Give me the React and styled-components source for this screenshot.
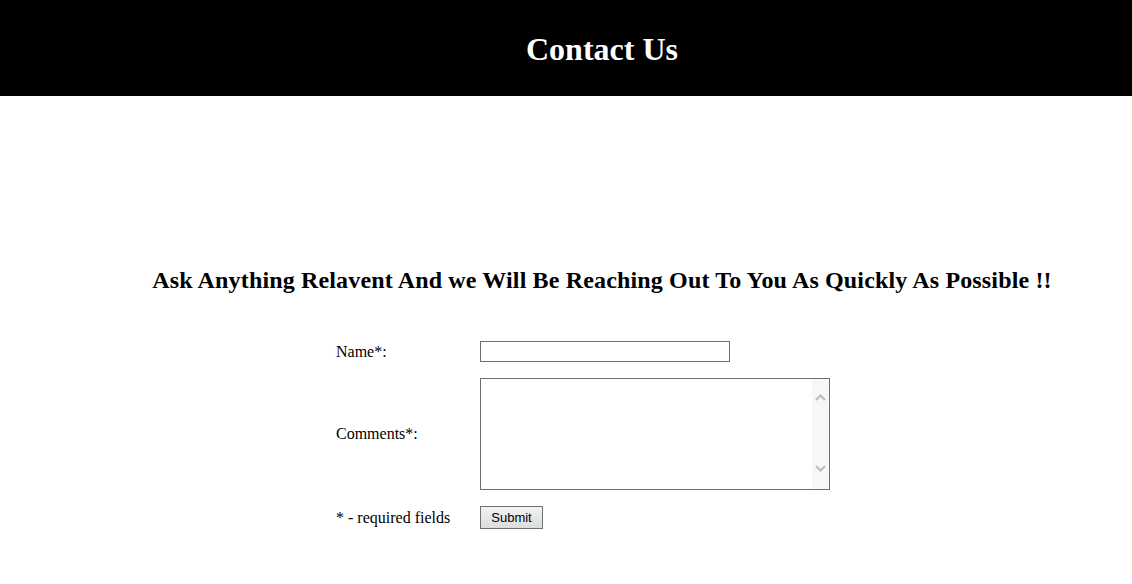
import React from 'react';
import styled, { createGlobalStyle } from 'styled-components';

const GlobalStyle = createGlobalStyle`
body {
  margin: 0;
  background: #fff;
  font-family: "Liberation Serif", "Times New Roman", serif;
  color: #000;
}
`;

const Header = styled.header`
height: 96px;
background-color: #000;
display: flex;
align-items: center;
justify-content: center;
padding-left: 72px;
`;

const Title = styled.h1`
margin: 2px 0 0 0;
color: #fff;
font-size: 32px;
font-weight: bold;
`;

const Main = styled.main`
padding-top: 169px;
padding-left: 72px;
`;

const Intro = styled.h2`
margin: 0 0 46px 0;
text-align: center;
font-size: 24px;
font-weight: bold;
line-height: 30px;
letter-spacing: 0.15px;
`;

const Form = styled.form`
margin-left: 264px;
display: grid;
grid-template-columns: 144px auto;
row-gap: 16px;
align-items: center;
justify-items: start;
`;

const Label = styled.label`
font-size: 16px;
`;

const TextInput = styled.input`
box-sizing: border-box;
width: 250px;
height: 21px;
margin: 0;
border: 1px solid #707070;
padding: 1px 2px;
font-size: 13px;
`;

const AreaWrap = styled.div`
position: relative;
width: 350px;
height: 112px;
`;

const TextArea = styled.textarea`
box-sizing: border-box;
width: 350px;
height: 112px;
margin: 0;
border: 1px solid #707070;
padding: 2px 20px 2px 2px;
resize: none;
overflow: hidden;
display: block;
font-family: "Liberation Mono", monospace;
font-size: 13px;
`;

// fake classic scrollbar laid over the textarea
const ScrollTrack = styled.div`
position: absolute;
top: 1px;
right: 1px;
bottom: 1px;
width: 17px;
background: #f7f7f7;
display: flex;
flex-direction: column;
justify-content: space-between;
align-items: center;
padding: 15px 0 17px;
box-sizing: border-box;
pointer-events: none;
`;

const Arrow = ({ down }) => (
    <svg width="11" height="7" viewBox="0 0 11 7">
        <polyline
            points={down ? '1,1 5.5,5.5 10,1' : '1,6 5.5,1.5 10,6'}
            fill="none"
            stroke="#bdbdbd"
            strokeWidth="2.2"
        />
    </svg>
);

const SubmitButton = styled.button`
box-sizing: border-box;
width: 63px;
height: 23px;
margin: 0;
padding: 0;
border: 1px solid #707070;
background: linear-gradient(#f2f2f2, #dcdcdc);
font-family: "Liberation Sans", Arial, sans-serif;
font-size: 13px;
color: #000;
`;

const App = () => {
    return (
        <>
            <GlobalStyle />
            <Header>
                <Title>Contact Us</Title>
            </Header>
            <Main>
                <Intro>Ask Anything Relavent And we Will Be Reaching Out To You As Quickly As Possible !!</Intro>
                <Form onSubmit={e => e.preventDefault()}>
                    <Label htmlFor="name">Name*:</Label>
                    <TextInput id="name" type="text" />
                    <Label htmlFor="comments">Comments*:</Label>
                    <AreaWrap>
                        <TextArea id="comments" />
                        <ScrollTrack>
                            <Arrow />
                            <Arrow down />
                        </ScrollTrack>
                    </AreaWrap>
                    <Label>* - required fields</Label>
                    <SubmitButton type="submit">Submit</SubmitButton>
                </Form>
            </Main>
        </>
    )
}

export default App
